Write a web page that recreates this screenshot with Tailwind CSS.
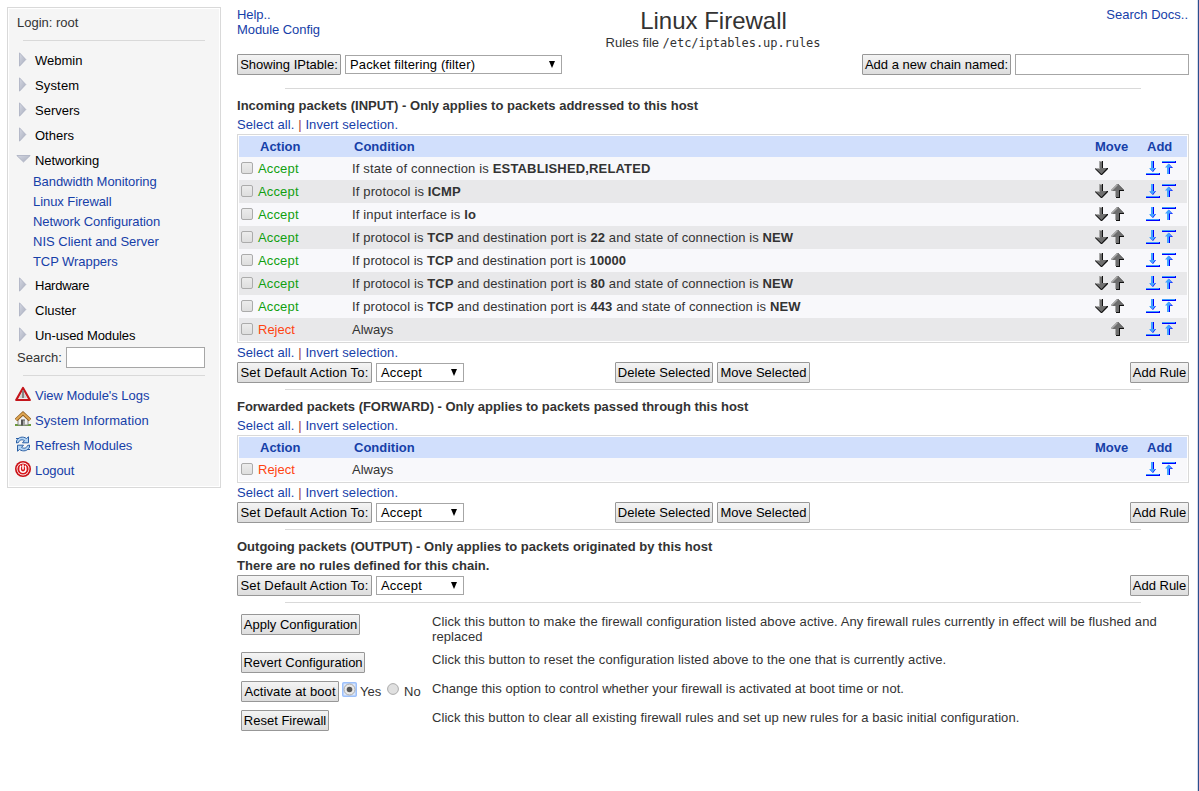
<!DOCTYPE html>
<html lang="en">
<head>
<meta charset="utf-8">
<title>Linux Firewall</title>
<script src="https://cdn.jsdelivr.net/npm/@tailwindcss/browser@4"></script>
</head>
<body class="bg-white">
<svg class="absolute h-0 w-0" aria-hidden="true">
  <defs>
    <linearGradient id="tri" x1="0" y1="0" x2="1" y2="1"><stop offset="0" stop-color="#d4d7e2"/><stop offset="1" stop-color="#a9aebd"/></linearGradient>
    <symbol id="right" viewBox="0 0 8 15"><path d="M.5 .8 6.800 7.500 .5 14.200z" fill="url(#tri)" stroke="#a9aec0" stroke-width=".8"/></symbol>
    <symbol id="open" viewBox="0 0 15 8"><path d="M.8 .5H14.200L7.500 7z" fill="url(#tri)" stroke="#a9aec0" stroke-width=".8"/></symbol>
    <symbol id="down" viewBox="0 0 13 14"><path d="M5 0h3v7h5v1L7 14H6L0 8V7h5z" fill="#111"/><path d="M4 0h3v7h5L6.500 13 0 7h4z" fill="#6e6e6e"/><path d="M4 0h3v1H5v7H1L0 7h4z" fill="#aaa"/></symbol>
    <symbol id="up" viewBox="0 0 13 14"><path d="M7 0 13 6v1H9v7H5V7H0z" fill="#111"/><path d="M6 0h1l5.500 6H8v7H4V7H0V6z" fill="#6e6e6e"/><path d="M6 0 0 6v1h1L7 1zM4 7h1v6H4z" fill="#aaa"/></symbol>
    <symbol id="addb" viewBox="0 0 14 14"><g shape-rendering="crispEdges"><path d="M0 12h14v2H0z" fill="#00f"/><path d="M0 12h13v1H0z" fill="#3b9cff"/></g><path d="M6 0h2v7h2l-3 4-3-3h2z" fill="#00f"/><path d="M5 0h2v7h2.500L6.500 10.500 3 7h2z" fill="#44a4ff"/></symbol>
    <symbol id="addt" viewBox="0 0 14 14"><g shape-rendering="crispEdges"><path d="M0 0h14v2H0z" fill="#00f"/><path d="M0 0h13v1H0z" fill="#3b9cff"/></g><path d="M7 3l4 4H8v6H6V7z" fill="#00f"/><path d="M6.500 2.500 10 6.500H7V13H5V6.500H3z" fill="#44a4ff"/></symbol>
  </defs>
</svg>
<div class="flex h-[791px] w-[1199px] overflow-hidden font-['Liberation_Sans',Arial,sans-serif] text-[13px] leading-[15px] text-[#333]">

  <aside class="mt-[7px] ml-[7px] h-[481px] w-[214px] shrink-0 border border-[#d9d9d9] p-px">
    <div class="h-full bg-[#f5f5f5] pl-[8px]">
      <div class="h-[31px] pt-[6px]">Login: root</div>
      <div class="ml-[6px] h-px w-[182px] bg-[#d9d9d9]"></div>
      <nav class="pt-[7px] text-black">
        <div class="flex h-[25px] items-center"><svg class="mb-[2px] ml-[2px] mr-[8px] h-[15px] w-[8px]"><use href="#right"/></svg><span>Webmin</span></div>
        <div class="flex h-[25px] items-center"><svg class="mb-[2px] ml-[2px] mr-[8px] h-[15px] w-[8px]"><use href="#right"/></svg><span class="tracking-[0.15px]">System</span></div>
        <div class="flex h-[25px] items-center"><svg class="mb-[2px] ml-[2px] mr-[8px] h-[15px] w-[8px]"><use href="#right"/></svg><span>Servers</span></div>
        <div class="flex h-[25px] items-center"><svg class="mb-[2px] ml-[2px] mr-[8px] h-[15px] w-[8px]"><use href="#right"/></svg><span>Others</span></div>
        <div class="flex h-[25px] items-center"><svg class="mb-[3px] -ml-[1px] mr-[4px] h-[8px] w-[15px]"><use href="#open"/></svg><span class="tracking-[-0.1px]">Networking</span></div>
        <div class="-mt-[1px] flex h-[101px] flex-col pl-[16px] leading-5 tracking-[-0.07px] text-[#1640a8]">
          <a>Bandwidth Monitoring</a><a>Linux Firewall</a><a>Network Configuration</a><a class="tracking-normal">NIS Client and Server</a><a>TCP Wrappers</a>
        </div>
        <div class="flex h-[25px] items-center"><svg class="mb-[2px] ml-[2px] mr-[8px] h-[15px] w-[8px]"><use href="#right"/></svg><span class="tracking-[-0.25px]">Hardware</span></div>
        <div class="flex h-[25px] items-center"><svg class="mb-[2px] ml-[2px] mr-[8px] h-[15px] w-[8px]"><use href="#right"/></svg><span>Cluster</span></div>
        <div class="flex h-[25px] items-center"><svg class="mb-[2px] ml-[2px] mr-[8px] h-[15px] w-[8px]"><use href="#right"/></svg><span class="tracking-[-0.1px]">Un-used Modules</span></div>
      </nav>
      <div class="-mt-px flex h-[21px] items-center"><span class="w-[49px]">Search:</span><span class="h-[21px] w-[139px] border border-[#a6a6a6] bg-white"></span></div>
      <div class="mt-[7px] ml-[6px] h-px w-[182px] bg-[#d9d9d9]"></div>
      <div class="-ml-[2px] pt-[7px] text-[#1640a8]">
        <div class="flex h-[25px] items-center gap-[4px]"><svg class="mb-[3px] h-4 w-4" viewBox="0 0 16 16"><path d="M8 2 14.800 14H1.200z" fill="#f4f4f4" stroke="#c4161c" stroke-width="2.200" stroke-linejoin="round"/><path d="M8 4.500 12 12.300H4z" fill="#d0d0d0"/><path d="M7 4.500h2v7.500H7z" fill="#858585"/></svg><span class="tracking-[-0.03px]">View Module's Logs</span></div>
        <div class="flex h-[25px] items-center gap-[4px]"><svg class="mb-[3px] h-4 w-4" viewBox="0 0 16 16"><path d="M0 13h16v2H0z" fill="#6b9b3c"/><path d="M3 7.500 8 3.500l5 4V14H3z" fill="#f0f0f0" stroke="#888"/><path d="M6 8.500h4v6H6z" fill="#555"/><path d="M8 9.500h2v5H8z" fill="#a5a5a5"/><path d="M1 9 8 2.500 15 9" fill="none" stroke="#8a5a1c" stroke-width="3.600"/><path d="M1 8.800 8 2.300 15 8.800" fill="none" stroke="#dfa653" stroke-width="2"/></svg><span class="tracking-[0.1px]">System Information</span></div>
        <div class="flex h-[25px] items-center gap-[4px]"><svg class="mb-[3px] h-4 w-4" viewBox="0 0 16 16"><path d="M1.500 5C3 1 8 0 11.500 2.500L13.500.8V6.800H7.500L9.500 4.600C7 3.200 4.500 3.600 3.500 6.500L1.500 7zM14.500 11C13 15 8 16 4.500 13.500L2.500 15.200V9.200H8.500L6.500 11.400C9 12.800 11.500 12.400 12.500 9.500L14.500 9z" fill="#b5d5f3" stroke="#2a5fa5"/><path d="M1 2.500h3M12 13.500h3" stroke="#2a5fa5"/></svg><span class="tracking-[-0.07px]">Refresh Modules</span></div>
        <div class="flex h-[25px] items-center gap-[4px]"><svg class="mb-[3px] h-4 w-4" viewBox="0 0 16 16"><circle cx="8" cy="8" r="8" fill="#c90f14"/><circle cx="8" cy="8" r="6.400" fill="#fff"/><circle cx="8" cy="8" r="5.600" fill="#d8161b"/><path d="M6 4.800C4.300 7 4.800 11.300 8 11.300S11.700 7 10 4.800" fill="none" stroke="#fff" stroke-width="1.600"/><path d="M8 3.500V8.500" stroke="#fff" stroke-width="1.600"/></svg><span class="tracking-[-0.1px]">Logout</span></div>
      </div>
    </div>
  </aside>

  <main class="ml-[16px] w-[952px] shrink-0 pt-[7px]">
    <header class="grid h-[47px] grid-cols-[1fr_auto_1fr]">
      <div class="flex flex-col tracking-[-0.07px] text-[#1640a8]"><a>Help..</a><a>Module Config</a></div>
      <div class="text-center"><h1 class="h-[28px] pl-px text-[24px] leading-[27px]">Linux Firewall</h1><p>Rules file <span class="font-['DejaVu_Sans_Mono',monospace] text-[12px] tracking-[-0.05px]">/etc/iptables.up.rules</span></p></div>
      <a class="pr-px text-right text-[#1640a8]">Search Docs..</a>
    </header>

    <div class="flex h-[21px] items-center">
      <button class="h-[21px] w-[104px] rounded-[1px] border border-[#979797] bg-linear-to-b from-[#f4f4f4] to-[#dddddd] text-black whitespace-nowrap">Showing IPtable:</button>
      <div class="ml-[4px] flex h-[19px] w-[217px] items-center border border-[#a6a6a6] bg-white pr-[6px] pl-[4px] text-black"><span class="grow tracking-[0.12px]">Packet filtering (filter)</span><svg class="h-[7px] w-[6px]" viewBox="0 0 6 7"><path d="M0 0h6L3 7z"/></svg></div>
      <button class="ml-auto h-[21px] w-[149px] rounded-[1px] border border-[#979797] bg-linear-to-b from-[#f4f4f4] to-[#dddddd] text-black whitespace-nowrap">Add a new chain named:</button>
      <span class="ml-[4px] h-[21px] w-[174px] border border-[#a6a6a6] bg-white"></span>
    </div>
    <div class="mx-auto mt-[13px] h-px w-[856px] bg-[#d9d9d9]"></div>

    <section>
      <h2 class="mt-[9px] font-bold tracking-[0.014px]">Incoming packets (INPUT) - Only applies to packets addressed to this host</h2>
      <p class="mt-[4px] tracking-[0.1px] text-[#1640a8]"><a>Select all.</a> <span class="text-[#a04040]">|</span> <a>Invert selection.</a></p>
      <div id="input" class="mt-[2px] border border-[#d9d9d9] p-px"></div>
      <p class="mt-[2px] tracking-[0.1px] text-[#1640a8]"><a>Select all.</a> <span class="text-[#a04040]">|</span> <a>Invert selection.</a></p>
      <div class="controls mt-[2px]" data-bulk="1"></div>
    </section>
    <div class="mx-auto mt-[6px] h-px w-[856px] bg-[#d9d9d9]"></div>

    <section>
      <h2 class="mt-[9px] font-bold tracking-[-0.026px]">Forwarded packets (FORWARD) - Only applies to packets passed through this host</h2>
      <p class="mt-[4px] tracking-[0.1px] text-[#1640a8]"><a>Select all.</a> <span class="text-[#a04040]">|</span> <a>Invert selection.</a></p>
      <div id="forward" class="mt-[2px] border border-[#d9d9d9] p-px"></div>
      <p class="mt-[2px] tracking-[0.1px] text-[#1640a8]"><a>Select all.</a> <span class="text-[#a04040]">|</span> <a>Invert selection.</a></p>
      <div class="controls mt-[2px]" data-bulk="1"></div>
    </section>
    <div class="mx-auto mt-[6px] h-px w-[856px] bg-[#d9d9d9]"></div>

    <section>
      <h2 class="mt-[9px] font-bold">Outgoing packets (OUTPUT) - Only applies to packets originated by this host</h2>
      <p class="mt-[4px] font-bold tracking-[0.025px]">There are no rules defined for this chain.</p>
      <div class="controls mt-[2px]"></div>
    </section>
    <div class="mx-auto mt-[6px] h-px w-[856px] bg-[#d9d9d9]"></div>

    <section class="mt-[11px] ml-[4px] grid grid-cols-[191px_740px] grid-rows-[38px_29px_29px_29px]">
      <div><button class="h-[21px] w-[119px] rounded-[1px] border border-[#979797] bg-linear-to-b from-[#f4f4f4] to-[#dddddd] text-black whitespace-nowrap">Apply Configuration</button></div>
      <p class="tracking-[0.084px]">Click this button to make the firewall configuration listed above active. Any firewall rules currently in effect will be flushed and<br>replaced</p>
      <div><button class="h-[21px] w-[124px] rounded-[1px] border border-[#979797] bg-linear-to-b from-[#f4f4f4] to-[#dddddd] text-black whitespace-nowrap">Revert Configuration</button></div>
      <p class="tracking-[0.09px]">Click this button to reset the configuration listed above to the one that is currently active.</p>
      <div class="flex items-start"><button class="h-[21px] w-[98px] rounded-[1px] border border-[#979797] bg-linear-to-b from-[#f4f4f4] to-[#dddddd] tracking-[0.1px] text-black whitespace-nowrap">Activate at boot</button>
        <svg class="mt-px ml-[3px] h-[15px] w-[15px]" viewBox="0 0 15 15"><rect x=".75" y=".75" width="13.500" height="13.500" rx="1" fill="#dbe7fb" stroke="#9cc0fb" stroke-width="1.500"/><circle cx="7.500" cy="7.500" r="5.500" fill="#e8e8e8" stroke="#aaa"/><circle cx="7.500" cy="7.500" r="2.800" fill="#555"/></svg>
        <span class="mt-[3px] ml-[3px] w-[27px]">Yes</span>
        <svg class="mt-[2px] h-[12px] w-[12px]" viewBox="0 0 12 12"><circle cx="6" cy="6" r="5.400" fill="#e0e0e0" stroke="#aaa"/></svg>
        <span class="mt-[3px] ml-[5px]">No</span></div>
      <p class="tracking-[0.035px]">Change this option to control whether your firewall is activated at boot time or not.</p>
      <div><button class="h-[21px] w-[88px] rounded-[1px] border border-[#979797] bg-linear-to-b from-[#f4f4f4] to-[#dddddd] text-black whitespace-nowrap">Reset Firewall</button></div>
      <p class="tracking-[0.065px]">Click this button to clear all existing firewall rules and set up new rules for a basic initial configuration.</p>
    </section>
  </main>
  <div class="ml-auto w-[2px] shrink-0 border-l border-[#d5dbe8] bg-[#2b4f8f]"></div>
</div>

<script>
const icon = (id, cls) => `<svg class="${cls}"><use href="#${id}"/></svg>`;
const head = `<div class="grid h-[21px] grid-cols-[19px_96px_741px_52px_40px] items-center bg-[#d1dffc] font-bold text-[#1640a8]"><span></span><span class="pl-[2px]">Action</span><span>Condition</span><span>Move</span><span>Add</span></div>`;
const row = ([action, cond, down, up, track], i) => `<div class="grid h-[23px] grid-cols-[19px_94px_743px_16px_35px_16px_14px] items-start pt-[4px] ${i % 2 ? 'bg-[#e8e8ea]' : 'bg-[#f8f8fb]'}">
  <span class="mt-px ml-[2px] size-[12px] rounded-[2px] border border-[#ababab] bg-linear-to-b from-[#ececec] to-[#dedede]"></span>
  <span class="${action === 'Accept' ? 'tracking-[0.15px] text-[#11a011]' : 'text-[#ff4411]'}">${action}</span><span class="${track}">${cond}</span>
  ${down ? icon('down', 'h-[14px] w-[13px]') : '<span></span>'}${up ? icon('up', 'h-[14px] w-[13px]') : '<span></span>'}
  ${icon('addb', 'h-[14px] w-[14px]')}${icon('addt', 'h-[14px] w-[14px]')}</div>`;
const tcp = p => `If protocol is <b>TCP</b> and destination port is <b>${p}</b>`;
const state = ' and state of connection is <b>NEW</b>';
document.getElementById('input').innerHTML = head + [
  ['Accept', 'If state of connection is <b>ESTABLISHED,RELATED</b>', 1, 0, 'tracking-[0.16px]'],
  ['Accept', 'If protocol is <b>ICMP</b>', 1, 1, 'tracking-[0.14px]'],
  ['Accept', 'If input interface is <b>lo</b>', 1, 1, 'tracking-[0.14px]'],
  ['Accept', tcp(22) + state, 1, 1, 'tracking-[0.1px]'],
  ['Accept', tcp(10000), 1, 1, 'tracking-[0.08px]'],
  ['Accept', tcp(80) + state, 1, 1, 'tracking-[0.1px]'],
  ['Accept', tcp(443) + state, 1, 1, 'tracking-[0.1px]'],
  ['Reject', 'Always', 0, 1, '']].map(row).join('');
document.getElementById('forward').innerHTML = head + row(['Reject', 'Always', 0, 0, ''], 0);
const btn = (w, t) => `<button class="${w} h-[21px] rounded-[1px] border border-[#979797] bg-linear-to-b from-[#f4f4f4] to-[#dddddd] text-black whitespace-nowrap">${t}</button>`;
document.querySelectorAll('.controls').forEach(el => {
  el.innerHTML = `<div class="grid h-[21px] grid-cols-[378px_1fr_auto] items-center">
  <div class="flex items-center gap-[4px]">${btn('w-[135px] tracking-[0.18px]', 'Set Default Action To:')}<div class="flex h-[19px] w-[88px] items-center border border-[#a6a6a6] bg-white pr-[6px] pl-[4px] text-black"><span class="grow tracking-[0.2px]">Accept</span><svg class="h-[7px] w-[6px]" viewBox="0 0 6 7"><path d="M0 0h6L3 7z"/></svg></div></div>
  <div class="flex gap-[4px]">${el.dataset.bulk ? btn('w-[98px] tracking-[0.05px]', 'Delete Selected') + btn('w-[93px]', 'Move Selected') : ''}</div>
  ${btn('w-[59px]', 'Add Rule')}</div>`;
});
</script>
</body>
</html>
